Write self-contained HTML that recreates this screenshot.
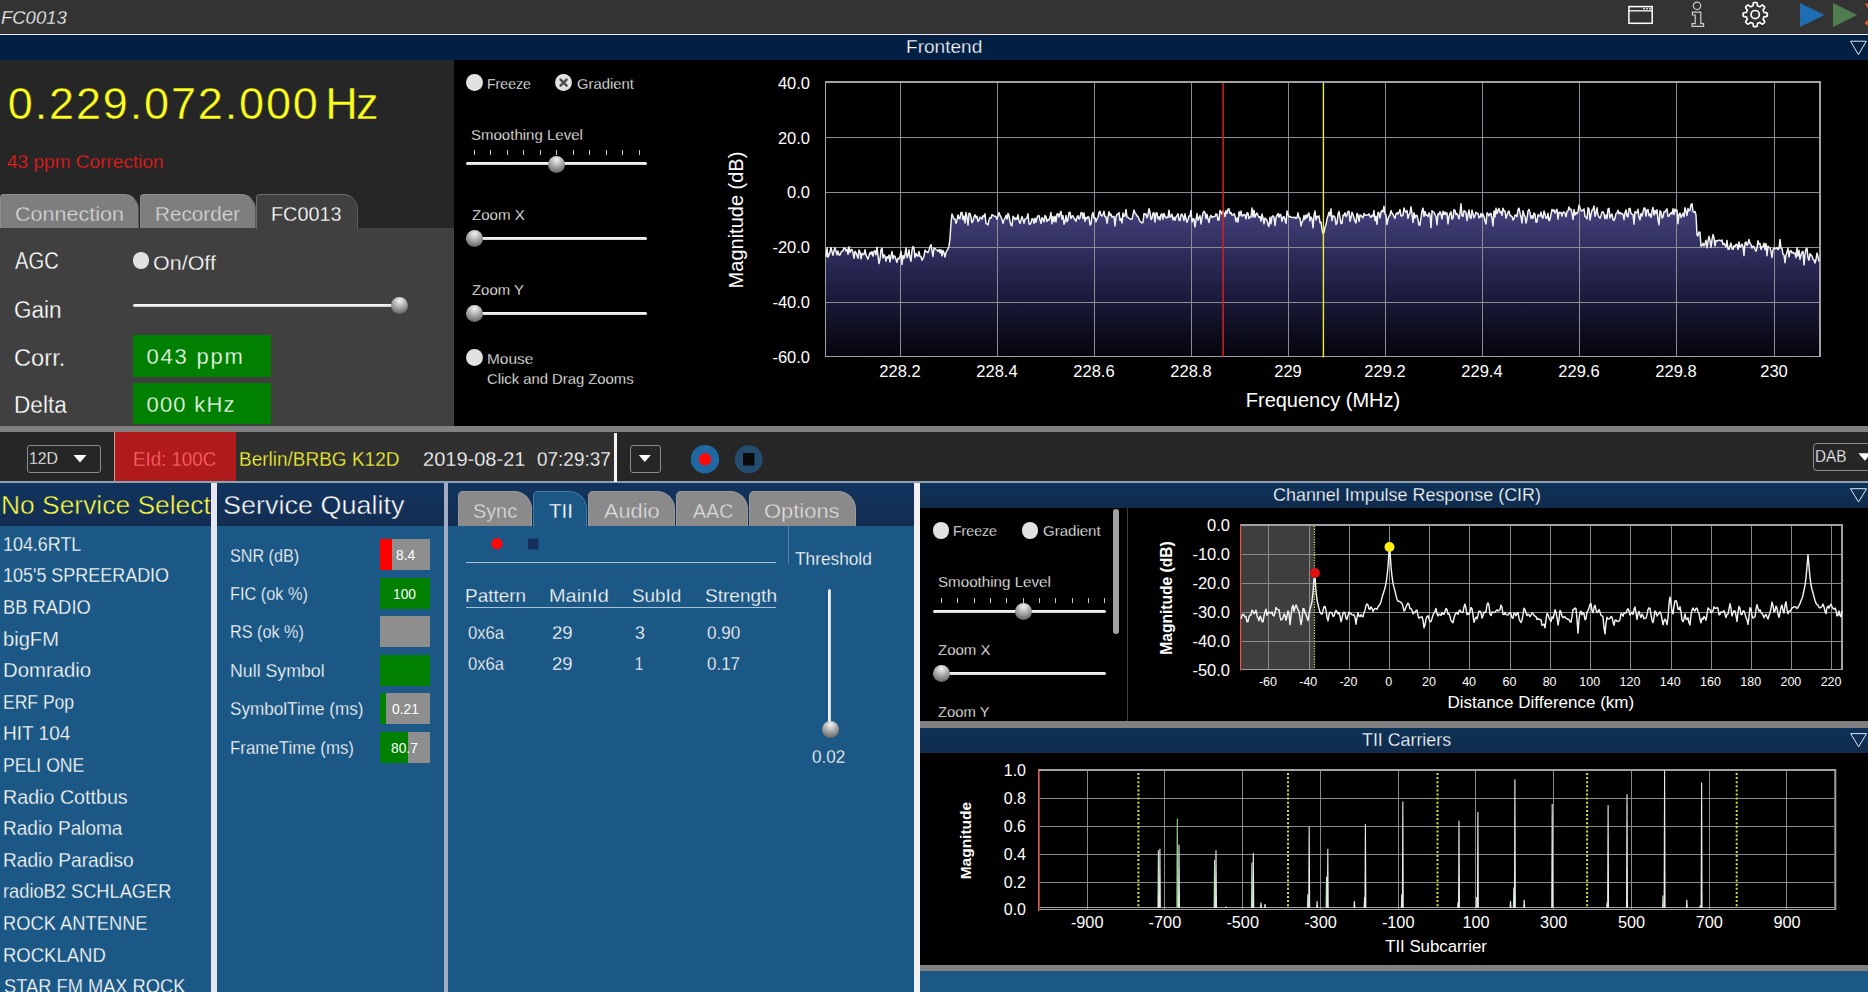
<!DOCTYPE html>
<html><head><meta charset="utf-8"><title>FC0013</title>
<style>
html,body{margin:0;padding:0;background:#000;}
body{width:1868px;height:992px;position:relative;overflow:hidden;font-family:"Liberation Sans",sans-serif;}
.t{position:absolute;white-space:pre;line-height:1;transform-origin:0 0;}
.r{position:absolute;}
svg{position:absolute;left:0;top:0;}
svg text{font-family:"Liberation Sans",sans-serif;fill:#fff;}
.radio{position:absolute;width:16.8px;height:16.8px;border-radius:50%;background:#e2e2e2;}
.thumb{position:absolute;width:17px;height:17px;border-radius:50%;background:radial-gradient(circle at 50% 22%,#f2f2f2 0%,#c4c4c4 28%,#8a8a8a 62%,#4a4a4a 100%);}
.hl{position:absolute;height:3px;border-radius:2px;background:linear-gradient(#fff,#d0d0d0);}
</style></head><body>
<div class="r" style="left:0px;top:0px;width:1868px;height:34px;background:#333333;"></div>
<div class="r" style="left:0px;top:33.5px;width:1868px;height:1.6px;background:#eeeeee;"></div>
<div class="r" style="left:0px;top:35px;width:1868px;height:25px;background:#022044;"></div>
<div class="r" style="left:0px;top:60px;width:454px;height:168px;background:#262626;"></div>
<div class="r" style="left:0px;top:228px;width:454px;height:198px;background:#404040;"></div>
<div class="r" style="left:454px;top:60px;width:1414px;height:366px;background:#000;"></div>
<div class="r" style="left:0px;top:426px;width:1868px;height:6px;background:#808080;"></div>
<div class="r" style="left:0px;top:432px;width:1868px;height:49px;background:#262626;"></div>
<div class="r" style="left:114px;top:432px;width:1px;height:49px;background:#c8a0a0;"></div>
<div class="r" style="left:115px;top:432px;width:121px;height:49px;background:#b01a1a;"></div>
<div class="r" style="left:236px;top:432px;width:378px;height:49px;background:#303030;"></div>
<div class="r" style="left:0px;top:481px;width:1868px;height:2px;background:#8fa0b4;"></div>
<div class="r" style="left:614px;top:432.5px;width:3px;height:49.5px;background:#f4f4f4;"></div>
<div class="r" style="left:0px;top:483px;width:211px;height:43px;background:linear-gradient(#10345e,#142d52);"></div>
<div class="r" style="left:0px;top:526px;width:211px;height:466px;background:#1c5886;"></div>
<div class="r" style="left:211px;top:483px;width:6px;height:509px;background:#e6e6ee;"></div>
<div class="r" style="left:217px;top:483px;width:227px;height:43px;background:linear-gradient(#10345e,#142d52);"></div>
<div class="r" style="left:217px;top:526px;width:227px;height:466px;background:#1c5886;"></div>
<div class="r" style="left:444px;top:483px;width:4px;height:509px;background:#a4acc4;"></div>
<div class="r" style="left:448px;top:483px;width:466px;height:43px;background:linear-gradient(#10345e,#142d52);"></div>
<div class="r" style="left:448px;top:526px;width:466px;height:466px;background:#1c5886;"></div>
<div class="r" style="left:914px;top:483px;width:6px;height:509px;background:#f2f0f2;"></div>
<div class="r" style="left:920px;top:483px;width:948px;height:25px;background:linear-gradient(#0d3359,#102a4b);"></div>
<div class="r" style="left:920px;top:508px;width:948px;height:213px;background:#000;"></div>
<div class="r" style="left:920px;top:721px;width:948px;height:7px;background:#808080;"></div>
<div class="r" style="left:920px;top:728px;width:948px;height:25px;background:linear-gradient(#0d3359,#102a4b);"></div>
<div class="r" style="left:920px;top:753px;width:948px;height:212px;background:#000;"></div>
<div class="r" style="left:920px;top:965px;width:948px;height:6px;background:#808080;"></div>
<div class="r" style="left:920px;top:971px;width:948px;height:21px;background:#1c5886;"></div>
<div class="t" style="left:0.95px;top:7.97px;font-size:19px;color:#f4f4f4;transform:scaleX(0.9719);font-style:italic;-webkit-text-stroke:0.28px #333333;">FC0013</div>
<div class="t" style="left:906.27px;top:37.65px;font-size:18px;color:#fff;transform:scaleX(1.0592);-webkit-text-stroke:0.28px #022044;">Frontend</div>
<div class="t" style="left:7.81px;top:80.63px;font-size:45px;color:#ffff1e;letter-spacing:1.857px;-webkit-text-stroke:0.4px #262626;">0.229.072.000</div>
<div class="t" style="left:325.23px;top:80.63px;font-size:45px;color:#ffff1e;letter-spacing:-1.741px;-webkit-text-stroke:0.4px #262626;">Hz</div>
<div class="t" style="left:6.97px;top:151.72px;font-size:19px;color:#f21a1a;transform:scaleX(1.0022);-webkit-text-stroke:0.28px #262626;">43 ppm Correction</div>
<div class="r" style="left:0px;top:194px;width:137px;height:33px;background:#7e7e7e;border:1px solid #8c8c8c;border-right-color:#5c5c5c;border-bottom:none;border-radius:4px 15px 0 0;"></div>
<div class="r" style="left:140px;top:194px;width:113.5px;height:33px;background:#7e7e7e;border:1px solid #8c8c8c;border-right-color:#5c5c5c;border-bottom:none;border-radius:4px 15px 0 0;"></div>
<div class="r" style="left:256px;top:194px;width:100px;height:34px;background:#404040;border:1px solid #6c6c6c;border-right-color:#5c5c5c;border-bottom:none;border-radius:4px 15px 0 0;"></div>
<div class="t" style="left:15.42px;top:203.06px;font-size:21px;color:#d6d6d6;transform:scaleX(1.0256);-webkit-text-stroke:0.28px #7e7e7e;">Connection</div>
<div class="t" style="left:155.35px;top:203.06px;font-size:21px;color:#d6d6d6;transform:scaleX(0.9844);-webkit-text-stroke:0.28px #7e7e7e;">Recorder</div>
<div class="t" style="left:271.42px;top:203.06px;font-size:21px;color:#fff;transform:scaleX(0.9427);-webkit-text-stroke:0.28px #404040;">FC0013</div>
<div class="t" style="left:15.00px;top:250.10px;font-size:23px;color:#fff;transform:scaleX(0.8777);-webkit-text-stroke:0.28px #404040;">AGC</div>
<div class="radio" style="left:132.7px;top:252.2px"></div>
<div class="t" style="left:153.03px;top:253.39px;font-size:20px;color:#fff;transform:scaleX(1.0745);-webkit-text-stroke:0.28px #404040;">On/Off</div>
<div class="t" style="left:13.87px;top:298.50px;font-size:23px;color:#fff;transform:scaleX(0.9807);-webkit-text-stroke:0.28px #404040;">Gain</div>
<div class="hl" style="left:133px;top:303.5px;width:260px"></div>
<div class="thumb" style="left:390.5px;top:296.5px"></div>
<div class="t" style="left:13.81px;top:346.90px;font-size:23px;color:#fff;transform:scaleX(1.0306);-webkit-text-stroke:0.28px #404040;">Corr.</div>
<div class="t" style="left:14.19px;top:393.90px;font-size:23px;color:#fff;transform:scaleX(0.9833);-webkit-text-stroke:0.28px #404040;">Delta</div>
<div class="r" style="left:133px;top:334.5px;width:137.5px;height:42.5px;background:#008000;"></div>
<div class="r" style="left:133px;top:382.5px;width:137.5px;height:41.5px;background:#008000;"></div>
<div class="t" style="left:146.43px;top:346.23px;font-size:22px;color:#f2fff0;letter-spacing:1.805px;-webkit-text-stroke:0.28px #008000;">043 ppm</div>
<div class="t" style="left:146.43px;top:394.23px;font-size:22px;color:#f2fff0;letter-spacing:1.236px;-webkit-text-stroke:0.28px #008000;">000 kHz</div>
<div class="radio" style="left:466.1px;top:74.1px"></div>
<div class="t" style="left:486.77px;top:75.83px;font-size:15.5px;color:#fff;transform:scaleX(0.9099);-webkit-text-stroke:0.28px #000000;">Freeze</div>
<div class="radio" style="left:555.2px;top:74.1px"></div>
<svg width="1868" height="992" style="pointer-events:none"><path d="M560.6 79.7 L566.6 85.7 M566.6 79.7 L560.6 85.7" stroke="#4c4c4c" stroke-width="2.5" stroke-linecap="round" fill="none"/></svg>
<div class="t" style="left:576.66px;top:75.83px;font-size:15.5px;color:#fff;transform:scaleX(0.9575);-webkit-text-stroke:0.28px #000000;">Gradient</div>
<div class="t" style="left:471.35px;top:126.63px;font-size:15.5px;color:#fff;transform:scaleX(0.9684);-webkit-text-stroke:0.28px #000000;">Smoothing Level</div>
<div class="r" style="left:473.8px;top:150px;width:1px;height:5px;background:#c8c8c8;"></div>
<div class="r" style="left:490.3px;top:150px;width:1px;height:5px;background:#c8c8c8;"></div>
<div class="r" style="left:506.8px;top:150px;width:1px;height:5px;background:#c8c8c8;"></div>
<div class="r" style="left:523.3px;top:150px;width:1px;height:5px;background:#c8c8c8;"></div>
<div class="r" style="left:539.8px;top:150px;width:1px;height:5px;background:#c8c8c8;"></div>
<div class="r" style="left:556.2px;top:150px;width:1px;height:5px;background:#c8c8c8;"></div>
<div class="r" style="left:572.7px;top:150px;width:1px;height:5px;background:#c8c8c8;"></div>
<div class="r" style="left:589.2px;top:150px;width:1px;height:5px;background:#c8c8c8;"></div>
<div class="r" style="left:605.7px;top:150px;width:1px;height:5px;background:#c8c8c8;"></div>
<div class="r" style="left:622.2px;top:150px;width:1px;height:5px;background:#c8c8c8;"></div>
<div class="r" style="left:638.7px;top:150px;width:1px;height:5px;background:#c8c8c8;"></div>
<div class="hl" style="left:466.3px;top:162px;width:181px"></div>
<div class="thumb" style="left:548.4px;top:155.5px"></div>
<div class="t" style="left:472.15px;top:206.63px;font-size:15.5px;color:#fff;transform:scaleX(0.9743);-webkit-text-stroke:0.28px #000000;">Zoom X</div>
<div class="hl" style="left:466.3px;top:237px;width:181px"></div>
<div class="thumb" style="left:466px;top:230px"></div>
<div class="t" style="left:472.15px;top:281.73px;font-size:15.5px;color:#fff;transform:scaleX(0.9612);-webkit-text-stroke:0.28px #000000;">Zoom Y</div>
<div class="hl" style="left:466.3px;top:312.2px;width:181px"></div>
<div class="thumb" style="left:466px;top:305.2px"></div>
<div class="radio" style="left:466.1px;top:349px"></div>
<div class="t" style="left:486.77px;top:351.13px;font-size:15.5px;color:#fff;transform:scaleX(0.9941);-webkit-text-stroke:0.28px #000000;">Mouse</div>
<div class="t" style="left:487.26px;top:370.73px;font-size:15.5px;color:#fff;transform:scaleX(0.9561);-webkit-text-stroke:0.28px #000000;">Click and Drag Zooms</div>
<div class="r" style="left:26.5px;top:445px;width:72.5px;height:25.5px;border:1px solid #8c8c8c;border-radius:3px;"></div>
<div class="t" style="left:28.82px;top:450.71px;font-size:16px;color:#fff;transform:scaleX(0.9868);-webkit-text-stroke:0.28px #262626;">12D</div>
<svg width="1868" height="992"><path d="M73.5 455 H86.5 L80 462.5 Z" fill="#fff"/><path d="M638.8 455 H650.8 L644.8 462 Z" fill="#fff"/><path d="M1858.4 453.2 H1871.4 L1864.9 460.7 Z" fill="#fff"/><circle cx="705" cy="459.3" r="14.2" fill="#1f68a4"/><circle cx="705" cy="459.3" r="6.2" fill="#ff0a0a"/><circle cx="748.7" cy="459.3" r="14" fill="#244c6e"/><rect x="743" y="453" width="11.5" height="12.5" fill="#0a0a0a"/></svg>
<div class="t" style="left:132.50px;top:449.39px;font-size:20px;color:#ff6464;transform:scaleX(0.9353);-webkit-text-stroke:0.28px #b01a1a;">EId: 100C</div>
<div class="t" style="left:239.48px;top:449.39px;font-size:20px;color:#f4f436;transform:scaleX(0.9495);-webkit-text-stroke:0.28px #303030;">Berlin/BRBG K12D</div>
<div class="t" style="left:422.90px;top:449.39px;font-size:20px;color:#fff;transform:scaleX(1.0010);-webkit-text-stroke:0.28px #303030;">2019-08-21</div>
<div class="t" style="left:537.24px;top:449.39px;font-size:20px;color:#fff;transform:scaleX(0.9474);-webkit-text-stroke:0.28px #303030;">07:29:37</div>
<div class="r" style="left:630px;top:445px;width:28.7px;height:25.5px;border:1px solid #8c8c8c;border-radius:3px;"></div>
<div class="r" style="left:1813px;top:443px;width:70px;height:25.6px;border:1px solid #8c8c8c;border-radius:4px;"></div>
<div class="t" style="left:1815.38px;top:449.31px;font-size:16px;color:#fff;transform:scaleX(0.9545);-webkit-text-stroke:0.28px #262626;">DAB</div>
<div class="r" style="left:0;top:483px;width:211px;height:43px;overflow:hidden">
<div class="t" style="left:1.15px;top:10.34px;font-size:25px;color:#ffff3a;transform:scaleX(1.0560);-webkit-text-stroke:0.45px #13305a;">No Service Select</div>
</div>
<div class="t" style="left:223.19px;top:492.74px;font-size:25px;color:#fff;transform:scaleX(1.0790);-webkit-text-stroke:0.45px #13305a;">Service Quality</div>
<div class="t" style="left:3.26px;top:534.71px;font-size:19.5px;color:#fff;transform:scaleX(0.9176);-webkit-text-stroke:0.28px #1c5886;">104.6RTL</div>
<div class="t" style="left:3.25px;top:566.31px;font-size:19.5px;color:#fff;transform:scaleX(0.9206);-webkit-text-stroke:0.28px #1c5886;">105'5 SPREERADIO</div>
<div class="t" style="left:3.13px;top:597.91px;font-size:19.5px;color:#fff;transform:scaleX(0.9418);-webkit-text-stroke:0.28px #1c5886;">BB RADIO</div>
<div class="t" style="left:3.29px;top:629.51px;font-size:19.5px;color:#fff;transform:scaleX(1.0315);-webkit-text-stroke:0.28px #1c5886;">bigFM</div>
<div class="t" style="left:2.97px;top:661.11px;font-size:19.5px;color:#fff;transform:scaleX(1.0427);-webkit-text-stroke:0.28px #1c5886;">Domradio</div>
<div class="t" style="left:3.20px;top:692.71px;font-size:19.5px;color:#fff;transform:scaleX(0.8979);-webkit-text-stroke:0.28px #1c5886;">ERF Pop</div>
<div class="t" style="left:3.08px;top:724.31px;font-size:19.5px;color:#fff;transform:scaleX(0.9748);-webkit-text-stroke:0.28px #1c5886;">HIT 104</div>
<div class="t" style="left:3.19px;top:755.91px;font-size:19.5px;color:#fff;transform:scaleX(0.9046);-webkit-text-stroke:0.28px #1c5886;">PELI ONE</div>
<div class="t" style="left:3.03px;top:787.51px;font-size:19.5px;color:#fff;transform:scaleX(1.0092);-webkit-text-stroke:0.28px #1c5886;">Radio Cottbus</div>
<div class="t" style="left:3.08px;top:819.11px;font-size:19.5px;color:#fff;transform:scaleX(0.9752);-webkit-text-stroke:0.28px #1c5886;">Radio Paloma</div>
<div class="t" style="left:3.07px;top:850.71px;font-size:19.5px;color:#fff;transform:scaleX(0.9806);-webkit-text-stroke:0.28px #1c5886;">Radio Paradiso</div>
<div class="t" style="left:3.41px;top:882.31px;font-size:19.5px;color:#fff;transform:scaleX(0.9362);-webkit-text-stroke:0.28px #1c5886;">radioB2 SCHLAGER</div>
<div class="t" style="left:3.13px;top:913.91px;font-size:19.5px;color:#fff;transform:scaleX(0.9398);-webkit-text-stroke:0.28px #1c5886;">ROCK ANTENNE</div>
<div class="t" style="left:3.12px;top:945.51px;font-size:19.5px;color:#fff;transform:scaleX(0.9482);-webkit-text-stroke:0.28px #1c5886;">ROCKLAND</div>
<div class="t" style="left:3.78px;top:977.11px;font-size:19.5px;color:#fff;transform:scaleX(0.9373);-webkit-text-stroke:0.28px #1c5886;">STAR FM MAX ROCK</div>
<div class="t" style="left:230.07px;top:547.67px;font-size:17.5px;color:#fff;transform:scaleX(0.9236);-webkit-text-stroke:0.28px #1c5886;">SNR (dB)</div>
<div class="t" style="left:230.10px;top:586.07px;font-size:17.5px;color:#fff;transform:scaleX(0.9320);-webkit-text-stroke:0.28px #1c5886;">FIC (ok %)</div>
<div class="t" style="left:230.10px;top:624.47px;font-size:17.5px;color:#fff;transform:scaleX(0.9267);-webkit-text-stroke:0.28px #1c5886;">RS (ok %)</div>
<div class="t" style="left:229.98px;top:662.87px;font-size:17.5px;color:#fff;transform:scaleX(1.0140);-webkit-text-stroke:0.28px #1c5886;">Null Symbol</div>
<div class="t" style="left:230.03px;top:701.27px;font-size:17.5px;color:#fff;transform:scaleX(0.9786);-webkit-text-stroke:0.28px #1c5886;">SymbolTime (ms)</div>
<div class="t" style="left:230.05px;top:739.67px;font-size:17.5px;color:#fff;transform:scaleX(0.9637);-webkit-text-stroke:0.28px #1c5886;">FrameTime (ms)</div>
<div class="r" style="left:380px;top:539.0px;width:50px;height:31px;background:#8e8e8e;"></div>
<div class="r" style="left:380px;top:539.0px;width:12px;height:31px;background:#ff0000;"></div>
<div class="t" style="left:395.62px;top:548.26px;font-size:14.5px;color:#fff;transform:scaleX(0.9500);-webkit-text-stroke:0;">8.4</div>
<div class="r" style="left:380px;top:577.5px;width:50px;height:31px;background:#8e8e8e;"></div>
<div class="r" style="left:380px;top:577.5px;width:50px;height:31px;background:#008000;"></div>
<div class="t" style="left:393.01px;top:586.76px;font-size:14.5px;color:#fff;transform:scaleX(0.9500);-webkit-text-stroke:0;">100</div>
<div class="r" style="left:380px;top:616.0px;width:50px;height:31px;background:#8e8e8e;"></div>
<div class="r" style="left:380px;top:654.5px;width:50px;height:31px;background:#8e8e8e;"></div>
<div class="r" style="left:380px;top:654.5px;width:50px;height:31px;background:#008000;"></div>
<div class="r" style="left:380px;top:693.0px;width:50px;height:31px;background:#8e8e8e;"></div>
<div class="r" style="left:380px;top:693.0px;width:6px;height:31px;background:#008000;"></div>
<div class="t" style="left:391.94px;top:702.26px;font-size:14.5px;color:#fff;transform:scaleX(0.9500);-webkit-text-stroke:0;">0.21</div>
<div class="r" style="left:380px;top:731.5px;width:50px;height:31px;background:#8e8e8e;"></div>
<div class="r" style="left:380px;top:731.5px;width:27.5px;height:31px;background:#008000;"></div>
<div class="t" style="left:391.26px;top:740.76px;font-size:14.5px;color:#fff;transform:scaleX(0.9500);-webkit-text-stroke:0;">80.7</div>
<div class="r" style="left:458.3px;top:491px;width:71.30000000000001px;height:34px;background:#8a8a8a;border:1px solid #989898;border-bottom:none;border-radius:5px 18px 0 0;"></div>
<div class="r" style="left:532.7px;top:491px;width:52.299999999999955px;height:35px;background:#1c5886;border:1px solid #3f79a6;border-bottom:none;border-radius:5px 18px 0 0;"></div>
<div class="r" style="left:587.6px;top:491px;width:85.29999999999995px;height:34px;background:#8a8a8a;border:1px solid #989898;border-bottom:none;border-radius:5px 18px 0 0;"></div>
<div class="r" style="left:675.8px;top:491px;width:70.70000000000005px;height:34px;background:#8a8a8a;border:1px solid #989898;border-bottom:none;border-radius:5px 18px 0 0;"></div>
<div class="r" style="left:749px;top:491px;width:105px;height:34px;background:#8a8a8a;border:1px solid #989898;border-bottom:none;border-radius:5px 18px 0 0;"></div>
<div class="t" style="left:473.32px;top:500.36px;font-size:21px;color:#dcdcdc;transform:scaleX(0.9436);-webkit-text-stroke:0.28px #8a8a8a;">Sync</div>
<div class="t" style="left:548.79px;top:500.36px;font-size:21px;color:#fff;transform:scaleX(0.9840);-webkit-text-stroke:0.28px #1c5886;">TII</div>
<div class="t" style="left:603.74px;top:500.36px;font-size:21px;color:#dcdcdc;transform:scaleX(1.0357);-webkit-text-stroke:0.28px #8a8a8a;">Audio</div>
<div class="t" style="left:693.20px;top:500.36px;font-size:21px;color:#dcdcdc;transform:scaleX(0.9329);-webkit-text-stroke:0.28px #8a8a8a;">AAC</div>
<div class="t" style="left:764.11px;top:500.36px;font-size:21px;color:#dcdcdc;transform:scaleX(1.0444);-webkit-text-stroke:0.28px #8a8a8a;">Options</div>
<svg width="1868" height="992"><circle cx="497" cy="543.7" r="5.6" fill="#ff0a0a"/><rect x="528" y="538.6" width="10.4" height="10.8" fill="#13305a"/></svg>
<div class="r" style="left:465.7px;top:562px;width:310.2px;height:1px;background:#a9bfd3;"></div>
<div class="r" style="left:788px;top:526px;width:1px;height:37.5px;background:#4d82ad;"></div>
<div class="t" style="left:795.00px;top:549.94px;font-size:18.5px;color:#fff;transform:scaleX(0.9335);-webkit-text-stroke:0.28px #1c5886;">Threshold</div>
<div class="t" style="left:465.49px;top:586.64px;font-size:18.5px;color:#fff;transform:scaleX(1.0232);-webkit-text-stroke:0.28px #1c5886;">Pattern</div>
<div class="t" style="left:549.41px;top:586.64px;font-size:18.5px;color:#fff;transform:scaleX(1.0754);-webkit-text-stroke:0.28px #1c5886;">MainId</div>
<div class="t" style="left:632.35px;top:586.64px;font-size:18.5px;color:#fff;transform:scaleX(1.0184);-webkit-text-stroke:0.28px #1c5886;">SubId</div>
<div class="t" style="left:705.14px;top:586.64px;font-size:18.5px;color:#fff;transform:scaleX(1.0295);-webkit-text-stroke:0.28px #1c5886;">Strength</div>
<div class="r" style="left:465.7px;top:606.7px;width:310.2px;height:1px;background:#a9bfd3;"></div>
<div class="t" style="left:468.13px;top:624.77px;font-size:17.5px;color:#fff;transform:scaleX(0.9519);-webkit-text-stroke:0.28px #1c5886;">0x6a</div>
<div class="t" style="left:552.07px;top:624.77px;font-size:17.5px;color:#fff;transform:scaleX(1.0584);-webkit-text-stroke:0.28px #1c5886;">29</div>
<div class="t" style="left:635.08px;top:624.77px;font-size:17.5px;color:#fff;transform:scaleX(1.0226);-webkit-text-stroke:0.28px #1c5886;">3</div>
<div class="t" style="left:707.32px;top:624.77px;font-size:17.5px;color:#fff;transform:scaleX(0.9778);-webkit-text-stroke:0.28px #1c5886;">0.90</div>
<div class="t" style="left:468.13px;top:655.67px;font-size:17.5px;color:#fff;transform:scaleX(0.9519);-webkit-text-stroke:0.28px #1c5886;">0x6a</div>
<div class="t" style="left:552.07px;top:655.67px;font-size:17.5px;color:#fff;transform:scaleX(1.0584);-webkit-text-stroke:0.28px #1c5886;">29</div>
<div class="t" style="left:634.89px;top:655.67px;font-size:17.5px;color:#fff;transform:scaleX(0.8276);-webkit-text-stroke:0.28px #1c5886;">1</div>
<div class="t" style="left:707.32px;top:655.67px;font-size:17.5px;color:#fff;transform:scaleX(0.9704);-webkit-text-stroke:0.28px #1c5886;">0.17</div>
<div class="r" style="left:828px;top:589px;width:3px;height:135px;border-radius:2px;background:linear-gradient(90deg,#fff,#c8d0d8)"></div>
<div class="thumb" style="left:821.5px;top:721px"></div>
<div class="t" style="left:811.92px;top:748.57px;font-size:17.5px;color:#fff;transform:scaleX(0.9765);-webkit-text-stroke:0.28px #1c5886;">0.02</div>
<div class="t" style="left:1273.10px;top:486.05px;font-size:18px;color:#fff;transform:scaleX(0.9958);-webkit-text-stroke:0.28px #0e3155;">Channel Impulse Response (CIR)</div>
<div class="t" style="left:1362.34px;top:731.05px;font-size:18px;color:#fff;transform:scaleX(0.9898);-webkit-text-stroke:0.28px #0e3055;">TII Carriers</div>
<div class="radio" style="left:932.5px;top:521.8px"></div>
<div class="t" style="left:953.27px;top:522.63px;font-size:15.5px;color:#fff;transform:scaleX(0.9099);-webkit-text-stroke:0.28px #000000;">Freeze</div>
<div class="radio" style="left:1021.5px;top:521.8px"></div>
<div class="t" style="left:1043.01px;top:522.63px;font-size:15.5px;color:#fff;transform:scaleX(0.9694);-webkit-text-stroke:0.28px #000000;">Gradient</div>
<div class="t" style="left:938.02px;top:574.23px;font-size:15.5px;color:#fff;transform:scaleX(0.9779);-webkit-text-stroke:0.28px #000000;">Smoothing Level</div>
<div class="r" style="left:941.1px;top:598px;width:1px;height:5px;background:#c8c8c8;"></div>
<div class="r" style="left:957.4px;top:598px;width:1px;height:5px;background:#c8c8c8;"></div>
<div class="r" style="left:973.8px;top:598px;width:1px;height:5px;background:#c8c8c8;"></div>
<div class="r" style="left:990.1px;top:598px;width:1px;height:5px;background:#c8c8c8;"></div>
<div class="r" style="left:1006.4px;top:598px;width:1px;height:5px;background:#c8c8c8;"></div>
<div class="r" style="left:1022.8px;top:598px;width:1px;height:5px;background:#c8c8c8;"></div>
<div class="r" style="left:1039.1px;top:598px;width:1px;height:5px;background:#c8c8c8;"></div>
<div class="r" style="left:1055.4px;top:598px;width:1px;height:5px;background:#c8c8c8;"></div>
<div class="r" style="left:1071.7px;top:598px;width:1px;height:5px;background:#c8c8c8;"></div>
<div class="r" style="left:1088.1px;top:598px;width:1px;height:5px;background:#c8c8c8;"></div>
<div class="r" style="left:1104.4px;top:598px;width:1px;height:5px;background:#c8c8c8;"></div>
<div class="hl" style="left:933px;top:609.8px;width:172.5px"></div>
<div class="thumb" style="left:1014.6px;top:602.8px"></div>
<div class="t" style="left:938.25px;top:641.93px;font-size:15.5px;color:#fff;transform:scaleX(0.9687);-webkit-text-stroke:0.28px #000000;">Zoom X</div>
<div class="hl" style="left:933px;top:672px;width:172.5px"></div>
<div class="thumb" style="left:933px;top:665px"></div>
<div class="r" style="left:920px;top:700px;width:200px;height:21px;overflow:hidden">
<div class="t" style="left:18.26px;top:3.63px;font-size:15.5px;color:#fff;transform:scaleX(0.9555);-webkit-text-stroke:0.28px #000000;">Zoom Y</div>
</div>
<div class="r" style="left:1112.6px;top:509.2px;width:6.3px;height:125px;border-radius:3px;background:#a2a2a2"></div>
<div class="r" style="left:1126.5px;top:508px;width:1px;height:213px;background:#3c3c3c;"></div>
<svg width="1868" height="992" viewBox="0 0 1868 992">
<defs><linearGradient id="fg" x1="0" y1="205" x2="0" y2="357" gradientUnits="userSpaceOnUse"><stop offset="0" stop-color="#44427c"/><stop offset="0.45" stop-color="#25244d"/><stop offset="1" stop-color="#04040c"/></linearGradient></defs>
<path d="M1850.5 41.2 H1866.3 L1858.4 54.6 Z" fill="none" stroke="#dfe9f3" stroke-width="1"/>
<path d="M1850.4 488.7 H1866.6 L1858.5 502 Z" fill="none" stroke="#dfe9f3" stroke-width="1"/>
<path d="M1850.7 733.6 H1866.5 L1858.6 746.8 Z" fill="none" stroke="#dfe9f3" stroke-width="1"/>
<g fill="none" stroke="#fff" stroke-width="1.5"><rect x="1628.9" y="6.6" width="23.3" height="16.7"/><path d="M1629 10.8 H1652" stroke-width="1.3"/></g>
<g fill="#fff"><rect x="1643.2" y="8" width="1.6" height="1.4"/><rect x="1646.2" y="8" width="1.6" height="1.4"/><rect x="1649.2" y="8" width="1.6" height="1.4"/></g>
<g fill="none" stroke="#cfcfcf" stroke-width="1.2"><circle cx="1697" cy="5.8" r="3.7"/><path d="M1692.4 12.2 H1700.8 V23.6 H1703.6 V26.4 H1692.1 V23.6 H1695.2 V15 H1692.4 Z"/></g>
<path d="M1755.20 2.50 L1755.67 2.51 L1756.15 2.55 L1756.61 2.65 L1757.03 3.02 L1757.26 4.25 L1757.39 5.49 L1757.66 5.87 L1757.98 6.03 L1758.32 6.15 L1758.64 6.29 L1758.97 6.42 L1759.29 6.57 L1759.63 6.69 L1760.10 6.61 L1761.06 5.83 L1762.09 5.11 L1762.65 5.15 L1763.05 5.41 L1763.41 5.72 L1763.76 6.04 L1764.08 6.39 L1764.39 6.75 L1764.65 7.15 L1764.69 7.71 L1763.97 8.74 L1763.19 9.70 L1763.11 10.17 L1763.23 10.51 L1763.38 10.83 L1763.51 11.16 L1763.65 11.48 L1763.77 11.82 L1763.93 12.14 L1764.31 12.41 L1765.55 12.54 L1766.78 12.77 L1767.15 13.19 L1767.25 13.65 L1767.29 14.13 L1767.30 14.60 L1767.29 15.07 L1767.25 15.55 L1767.15 16.01 L1766.78 16.43 L1765.55 16.66 L1764.31 16.79 L1763.93 17.06 L1763.77 17.38 L1763.65 17.72 L1763.51 18.04 L1763.38 18.37 L1763.23 18.69 L1763.11 19.03 L1763.19 19.50 L1763.97 20.46 L1764.69 21.49 L1764.65 22.05 L1764.39 22.45 L1764.08 22.81 L1763.76 23.16 L1763.41 23.48 L1763.05 23.79 L1762.65 24.05 L1762.09 24.09 L1761.06 23.37 L1760.10 22.59 L1759.63 22.51 L1759.29 22.63 L1758.97 22.78 L1758.64 22.91 L1758.32 23.05 L1757.98 23.17 L1757.66 23.33 L1757.39 23.71 L1757.26 24.95 L1757.03 26.18 L1756.61 26.55 L1756.15 26.65 L1755.67 26.69 L1755.20 26.70 L1754.73 26.69 L1754.25 26.65 L1753.79 26.55 L1753.37 26.18 L1753.14 24.95 L1753.01 23.71 L1752.74 23.33 L1752.42 23.17 L1752.08 23.05 L1751.76 22.91 L1751.43 22.78 L1751.11 22.63 L1750.77 22.51 L1750.30 22.59 L1749.34 23.37 L1748.31 24.09 L1747.75 24.05 L1747.35 23.79 L1746.99 23.48 L1746.64 23.16 L1746.32 22.81 L1746.01 22.45 L1745.75 22.05 L1745.71 21.49 L1746.43 20.46 L1747.21 19.50 L1747.29 19.03 L1747.17 18.69 L1747.02 18.37 L1746.89 18.04 L1746.75 17.72 L1746.63 17.38 L1746.47 17.06 L1746.09 16.79 L1744.85 16.66 L1743.62 16.43 L1743.25 16.01 L1743.15 15.55 L1743.11 15.07 L1743.10 14.60 L1743.11 14.13 L1743.15 13.65 L1743.25 13.19 L1743.62 12.77 L1744.85 12.54 L1746.09 12.41 L1746.47 12.14 L1746.63 11.82 L1746.75 11.48 L1746.89 11.16 L1747.02 10.83 L1747.17 10.51 L1747.29 10.17 L1747.21 9.70 L1746.43 8.74 L1745.71 7.71 L1745.75 7.15 L1746.01 6.75 L1746.32 6.39 L1746.64 6.04 L1746.99 5.72 L1747.35 5.41 L1747.75 5.15 L1748.31 5.11 L1749.34 5.83 L1750.30 6.61 L1750.77 6.69 L1751.11 6.57 L1751.43 6.42 L1751.76 6.29 L1752.08 6.15 L1752.42 6.03 L1752.74 5.87 L1753.01 5.49 L1753.14 4.25 L1753.37 3.02 L1753.79 2.65 L1754.25 2.55 L1754.73 2.51 Z" fill="none" stroke="#fff" stroke-width="1.7" stroke-linejoin="round"/>
<circle cx="1755.2" cy="14.6" r="4.1" fill="none" stroke="#fff" stroke-width="1.7"/>
<path d="M1800 3 L1824.6 15 L1800 27 Z" fill="#1f6db3"/>
<path d="M1833 3 L1857.2 15 L1833 27 Z" fill="#4f7d50"/>
<path d="M1865 3.5 L1868 3.5 L1868 8.5 Z M1864.5 23 L1868 20 V26 Z" fill="#e0642a"/>
<polygon points="826,356 826,257.0 827,247.8 828,257.3 829,254.9 830,251.8 831,247.5 832,251.7 833,255.3 834,250.5 835,247.8 836,251.3 837,254.8 838,251.0 839,255.0 840,255.0 841,252.4 842,250.9 843,251.0 844,247.7 845,248.3 846,250.9 847,249.1 848,254.3 849,246.7 850,252.4 851,250.0 852,249.5 853,252.6 854,258.3 855,251.3 856,252.5 857,255.6 858,258.2 859,249.9 860,251.9 861,258.8 862,253.3 863,254.6 864,254.4 865,249.7 866,254.8 867,257.2 868,259.1 869,255.9 870,252.5 871,254.1 872,251.6 873,256.0 874,251.5 875,250.7 876,254.7 877,247.2 878,255.8 879,263.5 880,259.4 881,249.6 882,248.1 883,258.0 884,254.7 885,256.1 886,261.0 887,256.7 888,258.0 889,255.1 890,261.9 891,255.6 892,251.6 893,258.8 894,255.8 895,256.4 896,259.5 897,262.4 898,258.3 899,258.9 900,256.6 901,251.3 902,264.4 903,255.4 904,258.5 905,254.5 906,247.9 907,257.7 908,255.6 909,249.8 910,257.9 911,261.2 912,250.0 913,246.4 914,248.2 915,257.6 916,253.4 917,255.8 918,256.0 919,251.4 920,256.5 921,256.5 922,260.3 923,258.4 924,256.2 925,250.1 926,251.7 927,251.8 928,252.6 929,250.3 930,246.5 931,244.7 932,251.0 933,256.4 934,248.1 935,248.7 936,249.5 937,250.2 938,251.3 939,249.5 940,252.7 941,249.7 942,255.8 943,250.5 944,252.8 945,257.0 946,252.5 947,250.5 948,249.0 949,246.1 950,238.1 951,222.8 952,213.9 953,216.5 954,219.0 955,219.0 956,223.3 957,220.5 958,215.0 959,218.3 960,218.7 961,212.4 962,212.4 963,219.7 964,216.0 965,223.0 966,212.4 967,217.4 968,225.0 969,213.2 970,213.5 971,217.2 972,222.7 973,221.2 974,216.7 975,214.8 976,217.7 977,216.3 978,221.4 979,220.3 980,217.1 981,217.7 982,219.2 983,215.8 984,216.4 985,213.8 986,223.6 987,223.9 988,224.9 989,219.9 990,217.6 991,218.1 992,214.7 993,215.2 994,216.1 995,216.2 996,216.7 997,219.3 998,215.6 999,212.4 1000,215.5 1001,217.1 1002,219.5 1003,223.4 1004,220.0 1005,218.0 1006,215.4 1007,219.1 1008,213.4 1009,215.9 1010,221.5 1011,225.0 1012,225.8 1013,216.2 1014,217.4 1015,219.7 1016,218.0 1017,219.3 1018,214.8 1019,221.0 1020,223.4 1021,220.1 1022,216.4 1023,219.6 1024,223.4 1025,218.9 1026,218.8 1027,217.9 1028,213.8 1029,223.8 1030,224.4 1031,222.6 1032,218.8 1033,219.0 1034,223.4 1035,218.2 1036,222.2 1037,217.6 1038,215.8 1039,215.6 1040,220.0 1041,223.4 1042,217.6 1043,218.9 1044,221.9 1045,215.6 1046,216.6 1047,221.5 1048,219.6 1049,220.2 1050,217.0 1051,212.4 1052,223.8 1053,216.6 1054,221.5 1055,216.2 1056,221.9 1057,214.0 1058,213.8 1059,217.1 1060,213.7 1061,211.2 1062,219.2 1063,215.7 1064,224.2 1065,221.9 1066,215.5 1067,221.6 1068,219.6 1069,212.6 1070,212.2 1071,218.4 1072,216.1 1073,215.7 1074,218.4 1075,219.4 1076,221.3 1077,217.2 1078,215.7 1079,219.0 1080,217.9 1081,212.7 1082,212.7 1083,218.6 1084,212.9 1085,221.3 1086,217.5 1087,218.7 1088,216.5 1089,217.3 1090,225.0 1091,223.9 1092,215.2 1093,212.5 1094,218.1 1095,217.8 1096,221.8 1097,218.8 1098,217.4 1099,212.5 1100,211.3 1101,215.6 1102,216.0 1103,214.4 1104,211.3 1105,216.8 1106,216.8 1107,223.2 1108,217.5 1109,211.7 1110,215.2 1111,214.1 1112,217.3 1113,216.6 1114,216.4 1115,225.9 1116,216.9 1117,214.4 1118,214.0 1119,212.6 1120,220.4 1121,218.6 1122,222.9 1123,213.0 1124,216.3 1125,215.9 1126,209.4 1127,217.1 1128,217.3 1129,218.3 1130,218.8 1131,219.4 1132,219.0 1133,214.8 1134,210.0 1135,212.9 1136,214.1 1137,215.8 1138,216.6 1139,219.0 1140,221.4 1141,222.0 1142,222.9 1143,222.5 1144,213.4 1145,214.6 1146,213.9 1147,217.7 1148,214.7 1149,208.8 1150,212.3 1151,219.4 1152,218.4 1153,213.2 1154,212.8 1155,222.1 1156,213.1 1157,212.9 1158,219.0 1159,216.7 1160,220.0 1161,214.7 1162,213.9 1163,219.2 1164,213.4 1165,216.2 1166,218.0 1167,217.2 1168,217.5 1169,210.3 1170,217.2 1171,216.5 1172,214.1 1173,219.9 1174,217.2 1175,220.3 1176,216.9 1177,215.7 1178,213.7 1179,220.3 1180,220.6 1181,214.4 1182,214.3 1183,216.5 1184,220.5 1185,213.7 1186,218.8 1187,222.2 1188,219.8 1189,216.0 1190,216.0 1191,210.4 1192,222.1 1193,219.0 1194,218.8 1195,226.8 1196,219.9 1197,213.6 1198,220.2 1199,217.7 1200,215.6 1201,224.0 1202,218.1 1203,212.9 1204,211.3 1205,212.7 1206,218.5 1207,214.2 1208,219.1 1209,222.5 1210,216.8 1211,215.3 1212,217.5 1213,216.7 1214,216.8 1215,216.4 1216,213.9 1217,214.5 1218,220.2 1219,220.0 1220,210.6 1221,211.7 1222,214.0 1223,211.3 1224,212.8 1225,216.6 1226,210.7 1227,213.4 1228,209.2 1229,208.8 1230,213.4 1231,212.6 1232,215.1 1233,215.1 1234,213.7 1235,215.9 1236,221.6 1237,218.1 1238,222.1 1239,211.7 1240,215.7 1241,211.1 1242,216.1 1243,215.7 1244,214.4 1245,214.9 1246,218.9 1247,212.8 1248,213.2 1249,218.5 1250,217.1 1251,216.9 1252,208.0 1253,217.1 1254,210.3 1255,217.2 1256,214.4 1257,213.0 1258,215.5 1259,217.5 1260,216.5 1261,221.1 1262,214.0 1263,218.2 1264,223.8 1265,218.1 1266,219.1 1267,220.3 1268,224.9 1269,226.5 1270,217.3 1271,223.7 1272,216.5 1273,215.8 1274,217.2 1275,225.6 1276,217.5 1277,215.4 1278,213.5 1279,217.3 1280,214.2 1281,215.2 1282,221.3 1283,217.4 1284,216.7 1285,219.9 1286,223.4 1287,210.9 1288,213.9 1289,216.9 1290,216.5 1291,217.1 1292,217.6 1293,217.3 1294,217.6 1295,217.3 1296,218.5 1297,217.6 1298,212.8 1299,217.9 1300,218.1 1301,226.0 1302,222.1 1303,220.3 1304,215.5 1305,219.6 1306,215.0 1307,217.7 1308,214.2 1309,213.0 1310,220.9 1311,217.1 1312,218.9 1313,227.8 1314,215.5 1315,211.0 1316,220.0 1317,216.2 1318,217.1 1319,215.9 1320,222.7 1321,222.1 1322,229.1 1323,233.7 1324,232.5 1325,227.0 1326,224.8 1327,219.0 1328,215.8 1329,212.3 1330,215.9 1331,208.9 1332,220.7 1333,216.1 1334,216.0 1335,217.4 1336,224.6 1337,223.0 1338,214.3 1339,211.4 1340,217.5 1341,223.6 1342,223.5 1343,215.2 1344,215.4 1345,212.9 1346,216.6 1347,214.8 1348,211.4 1349,211.3 1350,221.4 1351,217.7 1352,212.2 1353,214.5 1354,218.0 1355,221.4 1356,223.0 1357,213.4 1358,214.8 1359,221.3 1360,215.0 1361,215.6 1362,216.6 1363,217.9 1364,213.4 1365,215.2 1366,215.3 1367,215.1 1368,215.0 1369,213.9 1370,216.4 1371,217.4 1372,215.3 1373,216.3 1374,210.6 1375,220.7 1376,216.2 1377,224.3 1378,212.4 1379,213.3 1380,217.9 1381,212.0 1382,210.5 1383,211.9 1384,206.3 1385,213.7 1386,215.0 1387,224.5 1388,219.1 1389,216.2 1390,215.0 1391,210.6 1392,213.2 1393,214.3 1394,216.8 1395,218.4 1396,213.9 1397,212.7 1398,214.2 1399,212.1 1400,209.6 1401,215.9 1402,215.9 1403,214.9 1404,207.9 1405,211.1 1406,212.3 1407,210.5 1408,218.4 1409,214.7 1410,213.2 1411,206.8 1412,213.6 1413,222.5 1414,212.8 1415,217.9 1416,215.3 1417,215.5 1418,219.5 1419,225.0 1420,225.2 1421,217.4 1422,210.9 1423,208.1 1424,216.4 1425,211.4 1426,215.3 1427,215.1 1428,216.6 1429,212.9 1430,215.0 1431,227.6 1432,210.8 1433,211.9 1434,212.4 1435,214.6 1436,216.5 1437,224.7 1438,213.7 1439,214.6 1440,211.7 1441,214.2 1442,218.9 1443,211.2 1444,214.5 1445,212.0 1446,214.6 1447,213.0 1448,223.9 1449,216.8 1450,213.4 1451,211.8 1452,219.1 1453,218.1 1454,209.7 1455,210.5 1456,214.6 1457,213.6 1458,215.7 1459,218.9 1460,213.2 1461,203.7 1462,215.6 1463,216.4 1464,210.8 1465,211.2 1466,212.9 1467,220.6 1468,214.7 1469,209.9 1470,217.3 1471,218.4 1472,210.1 1473,213.9 1474,217.8 1475,215.5 1476,212.3 1477,213.1 1478,213.5 1479,217.8 1480,217.3 1481,213.5 1482,216.7 1483,213.9 1484,216.7 1485,221.2 1486,223.9 1487,212.8 1488,213.7 1489,215.9 1490,213.8 1491,213.4 1492,218.5 1493,226.0 1494,210.9 1495,217.0 1496,208.3 1497,213.6 1498,210.1 1499,208.3 1500,212.5 1501,211.6 1502,215.3 1503,208.2 1504,210.8 1505,211.0 1506,218.2 1507,215.2 1508,212.1 1509,211.0 1510,215.6 1511,215.7 1512,216.6 1513,220.1 1514,218.4 1515,215.3 1516,215.0 1517,216.6 1518,209.7 1519,208.2 1520,213.1 1521,217.0 1522,223.0 1523,210.7 1524,214.7 1525,216.4 1526,223.0 1527,218.8 1528,211.2 1529,209.4 1530,212.6 1531,218.4 1532,215.8 1533,218.4 1534,212.9 1535,214.3 1536,222.2 1537,222.0 1538,214.5 1539,215.9 1540,216.1 1541,212.1 1542,217.2 1543,218.1 1544,211.0 1545,214.1 1546,218.1 1547,218.4 1548,213.3 1549,220.7 1550,219.3 1551,214.4 1552,209.5 1553,210.9 1554,209.8 1555,212.9 1556,211.0 1557,209.3 1558,219.1 1559,212.2 1560,212.9 1561,212.3 1562,216.0 1563,212.5 1564,212.0 1565,213.1 1566,216.8 1567,211.7 1568,210.9 1569,206.9 1570,209.5 1571,209.3 1572,213.4 1573,219.4 1574,209.5 1575,215.1 1576,212.4 1577,213.8 1578,211.4 1579,205.1 1580,207.8 1581,210.8 1582,210.9 1583,210.0 1584,208.9 1585,216.7 1586,217.2 1587,219.0 1588,207.7 1589,209.0 1590,220.0 1591,214.5 1592,210.2 1593,209.4 1594,206.0 1595,216.3 1596,212.7 1597,207.8 1598,215.1 1599,216.9 1600,218.2 1601,215.4 1602,211.9 1603,211.8 1604,213.9 1605,218.7 1606,214.9 1607,218.6 1608,209.2 1609,208.4 1610,218.0 1611,215.5 1612,214.0 1613,219.5 1614,220.4 1615,218.1 1616,213.7 1617,212.9 1618,210.3 1619,213.9 1620,212.3 1621,213.9 1622,213.3 1623,214.4 1624,219.7 1625,212.9 1626,209.9 1627,215.9 1628,217.0 1629,208.8 1630,208.4 1631,213.4 1632,214.1 1633,214.4 1634,224.1 1635,211.6 1636,212.8 1637,212.8 1638,209.3 1639,217.0 1640,219.9 1641,213.4 1642,216.1 1643,212.2 1644,208.0 1645,208.0 1646,216.1 1647,210.2 1648,209.5 1649,215.7 1650,213.9 1651,217.5 1652,210.8 1653,207.4 1654,215.1 1655,210.4 1656,213.6 1657,209.7 1658,219.6 1659,224.7 1660,210.8 1661,212.0 1662,217.9 1663,216.9 1664,211.7 1665,212.1 1666,210.4 1667,208.8 1668,216.2 1669,216.3 1670,214.0 1671,212.7 1672,214.0 1673,208.8 1674,214.5 1675,209.1 1676,211.5 1677,210.0 1678,223.7 1679,214.5 1680,213.1 1681,217.4 1682,215.4 1683,213.2 1684,216.6 1685,207.8 1686,211.2 1687,215.5 1688,208.6 1689,210.9 1690,210.3 1691,204.6 1692,203.7 1693,211.3 1694,212.3 1695,211.5 1696,215.0 1697,234.9 1698,236.0 1699,231.9 1700,232.5 1701,246.2 1702,245.5 1703,243.2 1704,246.0 1705,243.7 1706,240.3 1707,247.8 1708,241.5 1709,236.3 1710,240.5 1711,247.5 1712,239.6 1713,234.6 1714,237.7 1715,246.0 1716,240.6 1717,241.1 1718,240.4 1719,240.3 1720,240.3 1721,240.9 1722,240.0 1723,244.6 1724,243.4 1725,245.1 1726,246.8 1727,240.4 1728,249.2 1729,249.3 1730,246.0 1731,243.1 1732,248.9 1733,249.2 1734,245.8 1735,246.4 1736,244.2 1737,244.4 1738,249.3 1739,242.0 1740,247.2 1741,246.0 1742,244.1 1743,246.6 1744,255.6 1745,243.3 1746,241.9 1747,245.2 1748,243.9 1749,239.4 1750,243.7 1751,244.5 1752,248.1 1753,246.3 1754,246.6 1755,249.1 1756,251.2 1757,247.9 1758,240.7 1759,244.0 1760,243.6 1761,249.5 1762,246.8 1763,246.5 1764,243.1 1765,249.7 1766,243.5 1767,255.7 1768,246.1 1769,247.4 1770,247.7 1771,251.1 1772,257.5 1773,249.6 1774,247.9 1775,248.6 1776,248.5 1777,247.6 1778,249.6 1779,248.5 1780,239.4 1781,248.2 1782,248.5 1783,254.3 1784,255.0 1785,262.7 1786,254.8 1787,252.1 1788,248.3 1789,256.9 1790,251.2 1791,250.6 1792,252.9 1793,252.3 1794,253.6 1795,253.1 1796,257.7 1797,247.8 1798,256.1 1799,250.3 1800,259.4 1801,255.2 1802,251.9 1803,251.4 1804,265.0 1805,254.3 1806,249.0 1807,248.3 1808,257.6 1809,260.1 1810,253.8 1811,255.1 1812,256.0 1813,259.3 1814,260.1 1815,263.0 1816,259.5 1817,253.1 1818,256.7 1819,261.6 1819,356" fill="url(#fg)"/>
<path d="M826 137.5 H1819 M826 192.5 H1819 M826 247.5 H1819 M826 302.5 H1819 M900.5 83 V356 M997.5 83 V356 M1094.5 83 V356 M1191.5 83 V356 M1288.5 83 V356 M1385.5 83 V356 M1482.5 83 V356 M1579.5 83 V356 M1676.5 83 V356 M1774.5 83 V356" stroke="#8c8c96" stroke-width="1" fill="none" shape-rendering="crispEdges"/>
<path d="M825 81 H1821 V357 H825 Z M826 83 V356 H1819 V83 Z" fill="#a2a2a4" fill-rule="evenodd"/>
<polyline points="826,257.0 827,247.8 828,257.3 829,254.9 830,251.8 831,247.5 832,251.7 833,255.3 834,250.5 835,247.8 836,251.3 837,254.8 838,251.0 839,255.0 840,255.0 841,252.4 842,250.9 843,251.0 844,247.7 845,248.3 846,250.9 847,249.1 848,254.3 849,246.7 850,252.4 851,250.0 852,249.5 853,252.6 854,258.3 855,251.3 856,252.5 857,255.6 858,258.2 859,249.9 860,251.9 861,258.8 862,253.3 863,254.6 864,254.4 865,249.7 866,254.8 867,257.2 868,259.1 869,255.9 870,252.5 871,254.1 872,251.6 873,256.0 874,251.5 875,250.7 876,254.7 877,247.2 878,255.8 879,263.5 880,259.4 881,249.6 882,248.1 883,258.0 884,254.7 885,256.1 886,261.0 887,256.7 888,258.0 889,255.1 890,261.9 891,255.6 892,251.6 893,258.8 894,255.8 895,256.4 896,259.5 897,262.4 898,258.3 899,258.9 900,256.6 901,251.3 902,264.4 903,255.4 904,258.5 905,254.5 906,247.9 907,257.7 908,255.6 909,249.8 910,257.9 911,261.2 912,250.0 913,246.4 914,248.2 915,257.6 916,253.4 917,255.8 918,256.0 919,251.4 920,256.5 921,256.5 922,260.3 923,258.4 924,256.2 925,250.1 926,251.7 927,251.8 928,252.6 929,250.3 930,246.5 931,244.7 932,251.0 933,256.4 934,248.1 935,248.7 936,249.5 937,250.2 938,251.3 939,249.5 940,252.7 941,249.7 942,255.8 943,250.5 944,252.8 945,257.0 946,252.5 947,250.5 948,249.0 949,246.1 950,238.1 951,222.8 952,213.9 953,216.5 954,219.0 955,219.0 956,223.3 957,220.5 958,215.0 959,218.3 960,218.7 961,212.4 962,212.4 963,219.7 964,216.0 965,223.0 966,212.4 967,217.4 968,225.0 969,213.2 970,213.5 971,217.2 972,222.7 973,221.2 974,216.7 975,214.8 976,217.7 977,216.3 978,221.4 979,220.3 980,217.1 981,217.7 982,219.2 983,215.8 984,216.4 985,213.8 986,223.6 987,223.9 988,224.9 989,219.9 990,217.6 991,218.1 992,214.7 993,215.2 994,216.1 995,216.2 996,216.7 997,219.3 998,215.6 999,212.4 1000,215.5 1001,217.1 1002,219.5 1003,223.4 1004,220.0 1005,218.0 1006,215.4 1007,219.1 1008,213.4 1009,215.9 1010,221.5 1011,225.0 1012,225.8 1013,216.2 1014,217.4 1015,219.7 1016,218.0 1017,219.3 1018,214.8 1019,221.0 1020,223.4 1021,220.1 1022,216.4 1023,219.6 1024,223.4 1025,218.9 1026,218.8 1027,217.9 1028,213.8 1029,223.8 1030,224.4 1031,222.6 1032,218.8 1033,219.0 1034,223.4 1035,218.2 1036,222.2 1037,217.6 1038,215.8 1039,215.6 1040,220.0 1041,223.4 1042,217.6 1043,218.9 1044,221.9 1045,215.6 1046,216.6 1047,221.5 1048,219.6 1049,220.2 1050,217.0 1051,212.4 1052,223.8 1053,216.6 1054,221.5 1055,216.2 1056,221.9 1057,214.0 1058,213.8 1059,217.1 1060,213.7 1061,211.2 1062,219.2 1063,215.7 1064,224.2 1065,221.9 1066,215.5 1067,221.6 1068,219.6 1069,212.6 1070,212.2 1071,218.4 1072,216.1 1073,215.7 1074,218.4 1075,219.4 1076,221.3 1077,217.2 1078,215.7 1079,219.0 1080,217.9 1081,212.7 1082,212.7 1083,218.6 1084,212.9 1085,221.3 1086,217.5 1087,218.7 1088,216.5 1089,217.3 1090,225.0 1091,223.9 1092,215.2 1093,212.5 1094,218.1 1095,217.8 1096,221.8 1097,218.8 1098,217.4 1099,212.5 1100,211.3 1101,215.6 1102,216.0 1103,214.4 1104,211.3 1105,216.8 1106,216.8 1107,223.2 1108,217.5 1109,211.7 1110,215.2 1111,214.1 1112,217.3 1113,216.6 1114,216.4 1115,225.9 1116,216.9 1117,214.4 1118,214.0 1119,212.6 1120,220.4 1121,218.6 1122,222.9 1123,213.0 1124,216.3 1125,215.9 1126,209.4 1127,217.1 1128,217.3 1129,218.3 1130,218.8 1131,219.4 1132,219.0 1133,214.8 1134,210.0 1135,212.9 1136,214.1 1137,215.8 1138,216.6 1139,219.0 1140,221.4 1141,222.0 1142,222.9 1143,222.5 1144,213.4 1145,214.6 1146,213.9 1147,217.7 1148,214.7 1149,208.8 1150,212.3 1151,219.4 1152,218.4 1153,213.2 1154,212.8 1155,222.1 1156,213.1 1157,212.9 1158,219.0 1159,216.7 1160,220.0 1161,214.7 1162,213.9 1163,219.2 1164,213.4 1165,216.2 1166,218.0 1167,217.2 1168,217.5 1169,210.3 1170,217.2 1171,216.5 1172,214.1 1173,219.9 1174,217.2 1175,220.3 1176,216.9 1177,215.7 1178,213.7 1179,220.3 1180,220.6 1181,214.4 1182,214.3 1183,216.5 1184,220.5 1185,213.7 1186,218.8 1187,222.2 1188,219.8 1189,216.0 1190,216.0 1191,210.4 1192,222.1 1193,219.0 1194,218.8 1195,226.8 1196,219.9 1197,213.6 1198,220.2 1199,217.7 1200,215.6 1201,224.0 1202,218.1 1203,212.9 1204,211.3 1205,212.7 1206,218.5 1207,214.2 1208,219.1 1209,222.5 1210,216.8 1211,215.3 1212,217.5 1213,216.7 1214,216.8 1215,216.4 1216,213.9 1217,214.5 1218,220.2 1219,220.0 1220,210.6 1221,211.7 1222,214.0 1223,211.3 1224,212.8 1225,216.6 1226,210.7 1227,213.4 1228,209.2 1229,208.8 1230,213.4 1231,212.6 1232,215.1 1233,215.1 1234,213.7 1235,215.9 1236,221.6 1237,218.1 1238,222.1 1239,211.7 1240,215.7 1241,211.1 1242,216.1 1243,215.7 1244,214.4 1245,214.9 1246,218.9 1247,212.8 1248,213.2 1249,218.5 1250,217.1 1251,216.9 1252,208.0 1253,217.1 1254,210.3 1255,217.2 1256,214.4 1257,213.0 1258,215.5 1259,217.5 1260,216.5 1261,221.1 1262,214.0 1263,218.2 1264,223.8 1265,218.1 1266,219.1 1267,220.3 1268,224.9 1269,226.5 1270,217.3 1271,223.7 1272,216.5 1273,215.8 1274,217.2 1275,225.6 1276,217.5 1277,215.4 1278,213.5 1279,217.3 1280,214.2 1281,215.2 1282,221.3 1283,217.4 1284,216.7 1285,219.9 1286,223.4 1287,210.9 1288,213.9 1289,216.9 1290,216.5 1291,217.1 1292,217.6 1293,217.3 1294,217.6 1295,217.3 1296,218.5 1297,217.6 1298,212.8 1299,217.9 1300,218.1 1301,226.0 1302,222.1 1303,220.3 1304,215.5 1305,219.6 1306,215.0 1307,217.7 1308,214.2 1309,213.0 1310,220.9 1311,217.1 1312,218.9 1313,227.8 1314,215.5 1315,211.0 1316,220.0 1317,216.2 1318,217.1 1319,215.9 1320,222.7 1321,222.1 1322,229.1 1323,233.7 1324,232.5 1325,227.0 1326,224.8 1327,219.0 1328,215.8 1329,212.3 1330,215.9 1331,208.9 1332,220.7 1333,216.1 1334,216.0 1335,217.4 1336,224.6 1337,223.0 1338,214.3 1339,211.4 1340,217.5 1341,223.6 1342,223.5 1343,215.2 1344,215.4 1345,212.9 1346,216.6 1347,214.8 1348,211.4 1349,211.3 1350,221.4 1351,217.7 1352,212.2 1353,214.5 1354,218.0 1355,221.4 1356,223.0 1357,213.4 1358,214.8 1359,221.3 1360,215.0 1361,215.6 1362,216.6 1363,217.9 1364,213.4 1365,215.2 1366,215.3 1367,215.1 1368,215.0 1369,213.9 1370,216.4 1371,217.4 1372,215.3 1373,216.3 1374,210.6 1375,220.7 1376,216.2 1377,224.3 1378,212.4 1379,213.3 1380,217.9 1381,212.0 1382,210.5 1383,211.9 1384,206.3 1385,213.7 1386,215.0 1387,224.5 1388,219.1 1389,216.2 1390,215.0 1391,210.6 1392,213.2 1393,214.3 1394,216.8 1395,218.4 1396,213.9 1397,212.7 1398,214.2 1399,212.1 1400,209.6 1401,215.9 1402,215.9 1403,214.9 1404,207.9 1405,211.1 1406,212.3 1407,210.5 1408,218.4 1409,214.7 1410,213.2 1411,206.8 1412,213.6 1413,222.5 1414,212.8 1415,217.9 1416,215.3 1417,215.5 1418,219.5 1419,225.0 1420,225.2 1421,217.4 1422,210.9 1423,208.1 1424,216.4 1425,211.4 1426,215.3 1427,215.1 1428,216.6 1429,212.9 1430,215.0 1431,227.6 1432,210.8 1433,211.9 1434,212.4 1435,214.6 1436,216.5 1437,224.7 1438,213.7 1439,214.6 1440,211.7 1441,214.2 1442,218.9 1443,211.2 1444,214.5 1445,212.0 1446,214.6 1447,213.0 1448,223.9 1449,216.8 1450,213.4 1451,211.8 1452,219.1 1453,218.1 1454,209.7 1455,210.5 1456,214.6 1457,213.6 1458,215.7 1459,218.9 1460,213.2 1461,203.7 1462,215.6 1463,216.4 1464,210.8 1465,211.2 1466,212.9 1467,220.6 1468,214.7 1469,209.9 1470,217.3 1471,218.4 1472,210.1 1473,213.9 1474,217.8 1475,215.5 1476,212.3 1477,213.1 1478,213.5 1479,217.8 1480,217.3 1481,213.5 1482,216.7 1483,213.9 1484,216.7 1485,221.2 1486,223.9 1487,212.8 1488,213.7 1489,215.9 1490,213.8 1491,213.4 1492,218.5 1493,226.0 1494,210.9 1495,217.0 1496,208.3 1497,213.6 1498,210.1 1499,208.3 1500,212.5 1501,211.6 1502,215.3 1503,208.2 1504,210.8 1505,211.0 1506,218.2 1507,215.2 1508,212.1 1509,211.0 1510,215.6 1511,215.7 1512,216.6 1513,220.1 1514,218.4 1515,215.3 1516,215.0 1517,216.6 1518,209.7 1519,208.2 1520,213.1 1521,217.0 1522,223.0 1523,210.7 1524,214.7 1525,216.4 1526,223.0 1527,218.8 1528,211.2 1529,209.4 1530,212.6 1531,218.4 1532,215.8 1533,218.4 1534,212.9 1535,214.3 1536,222.2 1537,222.0 1538,214.5 1539,215.9 1540,216.1 1541,212.1 1542,217.2 1543,218.1 1544,211.0 1545,214.1 1546,218.1 1547,218.4 1548,213.3 1549,220.7 1550,219.3 1551,214.4 1552,209.5 1553,210.9 1554,209.8 1555,212.9 1556,211.0 1557,209.3 1558,219.1 1559,212.2 1560,212.9 1561,212.3 1562,216.0 1563,212.5 1564,212.0 1565,213.1 1566,216.8 1567,211.7 1568,210.9 1569,206.9 1570,209.5 1571,209.3 1572,213.4 1573,219.4 1574,209.5 1575,215.1 1576,212.4 1577,213.8 1578,211.4 1579,205.1 1580,207.8 1581,210.8 1582,210.9 1583,210.0 1584,208.9 1585,216.7 1586,217.2 1587,219.0 1588,207.7 1589,209.0 1590,220.0 1591,214.5 1592,210.2 1593,209.4 1594,206.0 1595,216.3 1596,212.7 1597,207.8 1598,215.1 1599,216.9 1600,218.2 1601,215.4 1602,211.9 1603,211.8 1604,213.9 1605,218.7 1606,214.9 1607,218.6 1608,209.2 1609,208.4 1610,218.0 1611,215.5 1612,214.0 1613,219.5 1614,220.4 1615,218.1 1616,213.7 1617,212.9 1618,210.3 1619,213.9 1620,212.3 1621,213.9 1622,213.3 1623,214.4 1624,219.7 1625,212.9 1626,209.9 1627,215.9 1628,217.0 1629,208.8 1630,208.4 1631,213.4 1632,214.1 1633,214.4 1634,224.1 1635,211.6 1636,212.8 1637,212.8 1638,209.3 1639,217.0 1640,219.9 1641,213.4 1642,216.1 1643,212.2 1644,208.0 1645,208.0 1646,216.1 1647,210.2 1648,209.5 1649,215.7 1650,213.9 1651,217.5 1652,210.8 1653,207.4 1654,215.1 1655,210.4 1656,213.6 1657,209.7 1658,219.6 1659,224.7 1660,210.8 1661,212.0 1662,217.9 1663,216.9 1664,211.7 1665,212.1 1666,210.4 1667,208.8 1668,216.2 1669,216.3 1670,214.0 1671,212.7 1672,214.0 1673,208.8 1674,214.5 1675,209.1 1676,211.5 1677,210.0 1678,223.7 1679,214.5 1680,213.1 1681,217.4 1682,215.4 1683,213.2 1684,216.6 1685,207.8 1686,211.2 1687,215.5 1688,208.6 1689,210.9 1690,210.3 1691,204.6 1692,203.7 1693,211.3 1694,212.3 1695,211.5 1696,215.0 1697,234.9 1698,236.0 1699,231.9 1700,232.5 1701,246.2 1702,245.5 1703,243.2 1704,246.0 1705,243.7 1706,240.3 1707,247.8 1708,241.5 1709,236.3 1710,240.5 1711,247.5 1712,239.6 1713,234.6 1714,237.7 1715,246.0 1716,240.6 1717,241.1 1718,240.4 1719,240.3 1720,240.3 1721,240.9 1722,240.0 1723,244.6 1724,243.4 1725,245.1 1726,246.8 1727,240.4 1728,249.2 1729,249.3 1730,246.0 1731,243.1 1732,248.9 1733,249.2 1734,245.8 1735,246.4 1736,244.2 1737,244.4 1738,249.3 1739,242.0 1740,247.2 1741,246.0 1742,244.1 1743,246.6 1744,255.6 1745,243.3 1746,241.9 1747,245.2 1748,243.9 1749,239.4 1750,243.7 1751,244.5 1752,248.1 1753,246.3 1754,246.6 1755,249.1 1756,251.2 1757,247.9 1758,240.7 1759,244.0 1760,243.6 1761,249.5 1762,246.8 1763,246.5 1764,243.1 1765,249.7 1766,243.5 1767,255.7 1768,246.1 1769,247.4 1770,247.7 1771,251.1 1772,257.5 1773,249.6 1774,247.9 1775,248.6 1776,248.5 1777,247.6 1778,249.6 1779,248.5 1780,239.4 1781,248.2 1782,248.5 1783,254.3 1784,255.0 1785,262.7 1786,254.8 1787,252.1 1788,248.3 1789,256.9 1790,251.2 1791,250.6 1792,252.9 1793,252.3 1794,253.6 1795,253.1 1796,257.7 1797,247.8 1798,256.1 1799,250.3 1800,259.4 1801,255.2 1802,251.9 1803,251.4 1804,265.0 1805,254.3 1806,249.0 1807,248.3 1808,257.6 1809,260.1 1810,253.8 1811,255.1 1812,256.0 1813,259.3 1814,260.1 1815,263.0 1816,259.5 1817,253.1 1818,256.7 1819,261.6" fill="none" stroke="#f0f0f0" stroke-width="1.5" stroke-linejoin="round"/>
<path d="M1223.1 83 V357.5" stroke="#d62222" stroke-width="1.5"/>
<path d="M1323.4 83 V357.5" stroke="#ecec3c" stroke-width="1.4"/>
<text x="810" y="88.6" font-size="16.5" text-anchor="end">40.0</text>
<text x="810" y="143.5" font-size="16.5" text-anchor="end">20.0</text>
<text x="810" y="198.4" font-size="16.5" text-anchor="end">0.0</text>
<text x="810" y="253.3" font-size="16.5" text-anchor="end">-20.0</text>
<text x="810" y="308.2" font-size="16.5" text-anchor="end">-40.0</text>
<text x="810" y="363.1" font-size="16.5" text-anchor="end">-60.0</text>
<text x="900.0" y="377" font-size="16.5" text-anchor="middle">228.2</text>
<text x="997.0" y="377" font-size="16.5" text-anchor="middle">228.4</text>
<text x="1094.0" y="377" font-size="16.5" text-anchor="middle">228.6</text>
<text x="1191.0" y="377" font-size="16.5" text-anchor="middle">228.8</text>
<text x="1288.0" y="377" font-size="16.5" text-anchor="middle">229</text>
<text x="1385.0" y="377" font-size="16.5" text-anchor="middle">229.2</text>
<text x="1482.0" y="377" font-size="16.5" text-anchor="middle">229.4</text>
<text x="1579.0" y="377" font-size="16.5" text-anchor="middle">229.6</text>
<text x="1676.0" y="377" font-size="16.5" text-anchor="middle">229.8</text>
<text x="1774.0" y="377" font-size="16.5" text-anchor="middle">230</text>
<text x="1323" y="406.9" font-size="20" text-anchor="middle">Frequency (MHz)</text>
<text transform="translate(742.8 220) rotate(-90)" font-size="20" text-anchor="middle">Magnitude (dB)</text>
<rect x="1241" y="526" width="73" height="143" fill="#3e3e3e"/>
<path d="M1241 554.5 H1841 M1241 583.5 H1841 M1241 612.5 H1841 M1241 641.5 H1841 M1268.5 526 V669 M1309.5 526 V669 M1349.5 526 V669 M1389.5 526 V669 M1429.5 526 V669 M1469.5 526 V669 M1510.5 526 V669 M1550.5 526 V669 M1590.5 526 V669 M1630.5 526 V669 M1671.5 526 V669 M1711.5 526 V669 M1751.5 526 V669 M1791.5 526 V669 M1831.5 526 V669" stroke="#8a8a8a" stroke-width="1" fill="none" shape-rendering="crispEdges"/>
<path d="M1240 524 H1843 V670 H1240 Z M1241 526 V669 H1841 V526 Z" fill="#a2a2a2" fill-rule="evenodd"/>
<path d="M1240 524 H1241 V670.5 H1240 Z" fill="#d4605a"/><path d="M1241 526 H1241.8 V670.5 H1241 Z" fill="#8e2e28"/>
<path d="M1314.5 526 V669" stroke="#e6e63c" stroke-width="1.2" stroke-dasharray="1.3 1.3"/>
<polyline points="1241,618.7 1242,615.5 1243,614.3 1244,614.9 1245,616.9 1246,616.8 1247,621.8 1248,621.5 1249,616.9 1250,615.2 1251,615.0 1252,610.2 1253,611.4 1254,613.6 1255,612.7 1256,610.1 1257,615.7 1258,618.3 1259,620.7 1260,616.2 1261,617.6 1262,621.7 1263,621.8 1264,616.0 1265,611.8 1266,609.2 1267,615.5 1268,613.0 1269,612.0 1270,613.1 1271,613.2 1272,611.8 1273,615.4 1274,616.0 1275,612.6 1276,607.4 1277,609.2 1278,609.7 1279,609.7 1280,616.4 1281,620.1 1282,619.4 1283,618.1 1284,614.1 1285,615.2 1286,620.3 1287,616.3 1288,611.0 1289,613.4 1290,624.6 1291,616.3 1292,607.7 1293,605.2 1294,611.2 1295,607.5 1296,604.9 1297,607.2 1298,610.0 1299,611.4 1300,618.0 1301,624.5 1302,619.6 1303,608.6 1304,608.8 1305,613.0 1306,614.5 1307,617.7 1308,620.6 1309,614.6 1310,609.1 1311,605.9 1312,601.4 1313,592.5 1314,579.2 1315,576.7 1316,591.7 1317,600.0 1318,604.8 1319,608.6 1320,612.3 1321,613.6 1322,614.2 1323,610.4 1324,606.7 1325,606.5 1326,610.1 1327,617.4 1328,620.8 1329,614.6 1330,612.2 1331,612.3 1332,613.3 1333,616.4 1334,616.1 1335,612.5 1336,610.3 1337,611.9 1338,613.9 1339,612.4 1340,616.2 1341,621.7 1342,618.2 1343,613.5 1344,612.1 1345,612.9 1346,618.5 1347,619.4 1348,615.6 1349,612.1 1350,613.7 1351,613.4 1352,614.9 1353,615.0 1354,614.7 1355,617.8 1356,624.2 1357,617.6 1358,612.7 1359,616.1 1360,616.6 1361,614.5 1362,616.4 1363,616.8 1364,612.7 1365,610.2 1366,605.7 1367,603.9 1368,604.9 1369,609.0 1370,609.2 1371,606.8 1372,608.2 1373,611.3 1374,609.6 1375,608.4 1376,608.6 1377,609.3 1378,607.0 1379,605.4 1380,604.3 1381,601.8 1382,597.6 1383,594.3 1384,591.1 1385,588.1 1386,583.3 1387,576.5 1388,566.8 1389,551.9 1390,551.9 1391,566.9 1392,576.5 1393,583.2 1394,587.6 1395,591.0 1396,595.4 1397,599.3 1398,601.3 1399,601.3 1400,601.7 1401,602.6 1402,603.3 1403,606.6 1404,611.0 1405,610.0 1406,607.0 1407,604.8 1408,603.1 1409,604.6 1410,608.8 1411,608.5 1412,610.4 1413,613.8 1414,612.0 1415,612.8 1416,610.5 1417,610.2 1418,615.4 1419,618.2 1420,617.5 1421,617.1 1422,616.8 1423,620.4 1424,627.8 1425,624.9 1426,619.0 1427,616.5 1428,615.7 1429,618.8 1430,621.9 1431,621.6 1432,618.5 1433,615.0 1434,613.1 1435,611.0 1436,608.5 1437,613.6 1438,615.9 1439,614.2 1440,614.7 1441,615.4 1442,612.4 1443,614.0 1444,614.2 1445,611.4 1446,608.5 1447,609.6 1448,614.1 1449,613.8 1450,616.4 1451,620.7 1452,621.6 1453,622.7 1454,618.0 1455,614.6 1456,613.1 1457,612.4 1458,614.4 1459,611.1 1460,610.1 1461,611.7 1462,612.5 1463,612.3 1464,606.8 1465,604.1 1466,608.4 1467,614.7 1468,613.6 1469,614.3 1470,611.7 1471,607.6 1472,608.5 1473,615.1 1474,622.3 1475,619.2 1476,617.2 1477,618.8 1478,615.2 1479,611.1 1480,611.2 1481,612.4 1482,618.1 1483,615.7 1484,612.1 1485,612.6 1486,611.4 1487,604.8 1488,602.8 1489,605.4 1490,614.1 1491,615.6 1492,612.0 1493,612.2 1494,612.5 1495,612.3 1496,610.8 1497,609.9 1498,611.0 1499,610.3 1500,609.6 1501,605.1 1502,607.4 1503,614.4 1504,614.6 1505,612.4 1506,614.3 1507,614.9 1508,615.0 1509,613.7 1510,612.6 1511,613.9 1512,617.9 1513,618.3 1514,613.1 1515,613.4 1516,615.8 1517,613.5 1518,612.4 1519,618.4 1520,621.0 1521,622.5 1522,620.2 1523,614.7 1524,608.3 1525,609.6 1526,612.9 1527,615.6 1528,614.2 1529,614.8 1530,616.7 1531,615.0 1532,613.2 1533,613.6 1534,615.4 1535,616.1 1536,616.6 1537,619.4 1538,618.5 1539,619.6 1540,619.5 1541,619.9 1542,625.3 1543,624.9 1544,624.2 1545,627.7 1546,619.6 1547,613.5 1548,614.8 1549,617.7 1550,619.8 1551,621.5 1552,616.8 1553,618.5 1554,615.3 1555,609.8 1556,612.5 1557,617.4 1558,625.0 1559,619.8 1560,610.4 1561,611.9 1562,616.3 1563,617.6 1564,616.7 1565,617.0 1566,618.4 1567,618.6 1568,619.3 1569,619.5 1570,621.8 1571,622.2 1572,616.7 1573,609.4 1574,609.2 1575,608.1 1576,608.7 1577,619.1 1578,633.1 1579,619.7 1580,612.4 1581,611.1 1582,614.7 1583,612.6 1584,613.8 1585,619.7 1586,618.7 1587,612.0 1588,610.8 1589,607.8 1590,604.5 1591,603.5 1592,610.8 1593,612.8 1594,607.4 1595,605.2 1596,609.9 1597,612.6 1598,611.5 1599,609.5 1600,612.1 1601,615.4 1602,615.8 1603,616.9 1604,627.7 1605,633.8 1606,623.4 1607,617.3 1608,619.0 1609,618.9 1610,618.4 1611,616.6 1612,617.2 1613,621.7 1614,625.2 1615,620.4 1616,620.0 1617,621.4 1618,621.2 1619,621.2 1620,619.5 1621,613.5 1622,614.3 1623,616.2 1624,612.9 1625,612.9 1626,612.9 1627,610.2 1628,608.7 1629,611.3 1630,615.1 1631,613.6 1632,612.2 1633,614.4 1634,609.3 1635,607.0 1636,612.9 1637,619.4 1638,614.2 1639,611.4 1640,614.9 1641,617.5 1642,614.2 1643,615.8 1644,618.7 1645,618.4 1646,618.1 1647,614.9 1648,609.7 1649,607.8 1650,608.4 1651,615.1 1652,620.2 1653,622.6 1654,617.3 1655,610.9 1656,612.1 1657,616.0 1658,614.5 1659,613.6 1660,611.8 1661,613.8 1662,618.8 1663,624.8 1664,620.8 1665,619.1 1666,620.8 1667,624.6 1668,617.7 1669,604.2 1670,597.1 1671,602.8 1672,611.9 1673,613.9 1674,606.1 1675,600.9 1676,600.6 1677,603.1 1678,609.2 1679,609.7 1680,606.8 1681,611.8 1682,620.2 1683,621.7 1684,619.0 1685,614.0 1686,619.1 1687,619.5 1688,617.7 1689,622.8 1690,625.0 1691,615.0 1692,610.1 1693,608.0 1694,609.9 1695,610.9 1696,608.5 1697,608.2 1698,611.5 1699,613.7 1700,619.5 1701,622.8 1702,618.3 1703,619.2 1704,616.6 1705,617.7 1706,620.2 1707,614.6 1708,608.0 1709,609.3 1710,609.7 1711,612.7 1712,611.6 1713,610.9 1714,606.8 1715,608.2 1716,608.4 1717,607.4 1718,608.2 1719,614.9 1720,614.1 1721,611.9 1722,612.3 1723,612.1 1724,610.7 1725,614.0 1726,617.6 1727,614.4 1728,614.1 1729,609.2 1730,603.7 1731,608.4 1732,616.0 1733,612.8 1734,610.7 1735,611.2 1736,615.6 1737,621.4 1738,612.1 1739,606.4 1740,608.6 1741,614.5 1742,614.6 1743,611.0 1744,610.9 1745,614.1 1746,617.6 1747,619.8 1748,624.4 1749,616.7 1750,607.7 1751,608.7 1752,615.8 1753,618.1 1754,617.2 1755,616.8 1756,609.3 1757,604.6 1758,608.6 1759,611.2 1760,609.8 1761,612.6 1762,613.3 1763,615.4 1764,617.6 1765,615.6 1766,614.5 1767,617.0 1768,619.0 1769,615.5 1770,612.5 1771,608.5 1772,602.1 1773,605.7 1774,611.8 1775,611.0 1776,606.1 1777,608.0 1778,613.7 1779,617.3 1780,612.6 1781,607.3 1782,605.1 1783,610.7 1784,613.0 1785,605.3 1786,601.8 1787,609.3 1788,613.8 1789,611.3 1790,611.4 1791,609.6 1792,608.0 1793,607.5 1794,606.7 1795,606.8 1796,607.1 1797,608.6 1798,607.4 1799,605.4 1800,603.7 1801,600.8 1802,598.5 1803,595.2 1804,590.0 1805,585.3 1806,578.1 1807,566.5 1808,554.8 1809,566.4 1810,577.6 1811,585.0 1812,589.5 1813,593.0 1814,596.9 1815,600.5 1816,603.3 1817,604.6 1818,605.2 1819,607.3 1820,607.9 1821,607.2 1822,606.5 1823,604.1 1824,606.9 1825,611.2 1826,613.6 1827,607.7 1828,606.1 1829,608.2 1830,605.8 1831,604.2 1832,606.5 1833,608.5 1834,609.3 1835,608.1 1836,610.3 1837,615.8 1838,615.1 1839,610.9 1840,615.7 1841,616.6 1842,610.5" fill="none" stroke="#f2f2f2" stroke-width="1.45" stroke-linejoin="round"/>
<circle cx="1315" cy="573" r="4.9" fill="#e01010"/>
<circle cx="1389.5" cy="547" r="5" fill="#ffee10"/>
<text x="1230" y="531.4" font-size="16.5" text-anchor="end">0.0</text>
<text x="1230" y="560.4" font-size="16.5" text-anchor="end">-10.0</text>
<text x="1230" y="589.4" font-size="16.5" text-anchor="end">-20.0</text>
<text x="1230" y="618.4" font-size="16.5" text-anchor="end">-30.0</text>
<text x="1230" y="647.4" font-size="16.5" text-anchor="end">-40.0</text>
<text x="1230" y="676.4" font-size="16.5" text-anchor="end">-50.0</text>
<text x="1268.0" y="686.3" font-size="12.5" text-anchor="middle">-60</text>
<text x="1308.3" y="686.3" font-size="12.5" text-anchor="middle">-40</text>
<text x="1348.5" y="686.3" font-size="12.5" text-anchor="middle">-20</text>
<text x="1388.7" y="686.3" font-size="12.5" text-anchor="middle">0</text>
<text x="1428.9" y="686.3" font-size="12.5" text-anchor="middle">20</text>
<text x="1469.1" y="686.3" font-size="12.5" text-anchor="middle">40</text>
<text x="1509.4" y="686.3" font-size="12.5" text-anchor="middle">60</text>
<text x="1549.6" y="686.3" font-size="12.5" text-anchor="middle">80</text>
<text x="1589.8" y="686.3" font-size="12.5" text-anchor="middle">100</text>
<text x="1630.0" y="686.3" font-size="12.5" text-anchor="middle">120</text>
<text x="1670.2" y="686.3" font-size="12.5" text-anchor="middle">140</text>
<text x="1710.5" y="686.3" font-size="12.5" text-anchor="middle">160</text>
<text x="1750.7" y="686.3" font-size="12.5" text-anchor="middle">180</text>
<text x="1790.9" y="686.3" font-size="12.5" text-anchor="middle">200</text>
<text x="1831.1" y="686.3" font-size="12.5" text-anchor="middle">220</text>
<text x="1540.8" y="708" font-size="17" text-anchor="middle">Distance Difference (km)</text>
<text transform="translate(1172.4 598) rotate(-90)" font-size="15.6" font-weight="bold" text-anchor="middle">Magnitude (dB)</text>
<path d="M1040 798.5 H1834.3 M1040 826.5 H1834.3 M1040 854.5 H1834.3 M1040 882.5 H1834.3 M1087.5 771 V909 M1164.5 771 V909 M1242.5 771 V909 M1320.5 771 V909 M1398.5 771 V909 M1475.5 771 V909 M1553.5 771 V909 M1631.5 771 V909 M1709.5 771 V909 M1786.5 771 V909" stroke="#8a8a8a" stroke-width="1" fill="none" shape-rendering="crispEdges"/>
<path d="M1038 769 H1836.3 V910 H1038 Z M1040 771 V909 H1834.3 V771 Z" fill="#a2a2a2" fill-rule="evenodd"/>
<path d="M1038 769 H1039 V911 H1038 Z" fill="#d4605a"/><path d="M1039 771 H1039.9 V911 H1039 Z" fill="#8e2e28"/>
<path d="M1040 907.5 H1834" stroke="#a6a6a6" stroke-width="1.1"/>
<path d="M1138.4 773 V908" stroke="#dede2a" stroke-width="2" stroke-dasharray="2 2.1"/>
<path d="M1288.0 773 V908" stroke="#dede2a" stroke-width="2" stroke-dasharray="2 2.1"/>
<path d="M1437.5 773 V908" stroke="#dede2a" stroke-width="2" stroke-dasharray="2 2.1"/>
<path d="M1587.1 773 V908" stroke="#dede2a" stroke-width="2" stroke-dasharray="2 2.1"/>
<path d="M1736.7 773 V908" stroke="#dede2a" stroke-width="2" stroke-dasharray="2 2.1"/>
<path d="M1157.4 908.0 L1157.85 850.2 L1158.95 850.2 L1159.4 908.0 Z" fill="#bfe3bf"/>
<path d="M1158.9 908.0 L1159.35 848.8 L1160.45 848.8 L1160.9 908.0 Z" fill="#e8ece8"/>
<path d="M1158.0 908.0 L1158.45 894.2 L1159.55 894.2 L1160.0 908.0 Z" fill="#e8ece8"/>
<path d="M1176.3 908.0 L1176.75 818.6 L1177.85 818.6 L1178.3 908.0 Z" fill="#8fd08f"/>
<path d="M1178.0 908.0 L1178.45 844.7 L1179.55 844.7 L1180.0 908.0 Z" fill="#e8ece8"/>
<path d="M1213.6 908.0 L1214.05 859.8 L1215.15 859.8 L1215.6 908.0 Z" fill="#bfe3bf"/>
<path d="M1215.0 908.0 L1215.45 850.2 L1216.55 850.2 L1217.0 908.0 Z" fill="#e8ece8"/>
<path d="M1250.9 908.0 L1251.35 862.6 L1252.45 862.6 L1252.9 908.0 Z" fill="#bfe3bf"/>
<path d="M1252.3 908.0 L1252.75 853.0 L1253.85 853.0 L1254.3 908.0 Z" fill="#e8ece8"/>
<path d="M1260.0 908.0 L1260.45 902.5 L1261.55 902.5 L1262.0 908.0 Z" fill="#e8ece8"/>
<path d="M1264.0 908.0 L1264.45 903.9 L1265.55 903.9 L1266.0 908.0 Z" fill="#e8ece8"/>
<path d="M1225.0 908.0 L1225.45 906.6 L1226.55 906.6 L1227.0 908.0 Z" fill="#e8ece8"/>
<path d="M1306.8 908.0 L1307.25 894.2 L1308.35 894.2 L1308.8 908.0 Z" fill="#bfe3bf"/>
<path d="M1308.2 908.0 L1308.65 826.8 L1309.75 826.8 L1310.2 908.0 Z" fill="#e8ece8"/>
<path d="M1316.1 908.0 L1316.55 901.1 L1317.65 901.1 L1318.1 908.0 Z" fill="#e8ece8"/>
<path d="M1325.5 908.0 L1325.95 876.4 L1327.05 876.4 L1327.5 908.0 Z" fill="#bfe3bf"/>
<path d="M1326.8 908.0 L1327.25 848.8 L1328.35 848.8 L1328.8 908.0 Z" fill="#e8ece8"/>
<path d="M1353.4 908.0 L1353.85 901.1 L1354.95 901.1 L1355.4 908.0 Z" fill="#e8ece8"/>
<path d="M1363.6 908.0 L1364.05 897.0 L1365.15 897.0 L1365.6 908.0 Z" fill="#e8ece8"/>
<path d="M1364.4 908.0 L1364.85 824.1 L1365.95 824.1 L1366.4 908.0 Z" fill="#e8ece8"/>
<path d="M1400.8 908.0 L1401.25 894.2 L1402.35 894.2 L1402.8 908.0 Z" fill="#e8ece8"/>
<path d="M1401.8 908.0 L1402.25 801.4 L1403.35 801.4 L1403.8 908.0 Z" fill="#e8ece8"/>
<path d="M1456.9 908.0 L1457.35 902.5 L1458.45 902.5 L1458.9 908.0 Z" fill="#bfe3bf"/>
<path d="M1458.0 908.0 L1458.45 820.8 L1459.55 820.8 L1460.0 908.0 Z" fill="#e8ece8"/>
<path d="M1475.6 908.0 L1476.05 897.0 L1477.15 897.0 L1477.6 908.0 Z" fill="#bfe3bf"/>
<path d="M1476.9 908.0 L1477.35 811.7 L1478.45 811.7 L1478.9 908.0 Z" fill="#e8ece8"/>
<path d="M1509.5 908.0 L1509.95 901.1 L1511.05 901.1 L1511.5 908.0 Z" fill="#e8ece8"/>
<path d="M1512.8 908.0 L1513.25 887.4 L1514.35 887.4 L1514.8 908.0 Z" fill="#bfe3bf"/>
<path d="M1513.9 908.0 L1514.35 779.3 L1515.45 779.3 L1515.9 908.0 Z" fill="#e8ece8"/>
<path d="M1523.2 908.0 L1523.65 899.7 L1524.75 899.7 L1525.2 908.0 Z" fill="#e8ece8"/>
<path d="M1551.2 908.0 L1551.65 804.0 L1552.75 804.0 L1553.2 908.0 Z" fill="#e8ece8"/>
<path d="M1606.0 908.0 L1606.45 902.5 L1607.55 902.5 L1608.0 908.0 Z" fill="#bfe3bf"/>
<path d="M1607.1 908.0 L1607.55 805.1 L1608.65 805.1 L1609.1 908.0 Z" fill="#e8ece8"/>
<path d="M1626.0 908.0 L1626.45 794.2 L1627.55 794.2 L1628.0 908.0 Z" fill="#e8ece8"/>
<path d="M1662.0 908.0 L1662.45 895.6 L1663.55 895.6 L1664.0 908.0 Z" fill="#bfe3bf"/>
<path d="M1663.6 908.0 L1664.05 770.4 L1665.15 770.4 L1665.6 908.0 Z" fill="#e8ece8"/>
<path d="M1685.8 908.0 L1686.25 899.7 L1687.35 899.7 L1687.8 908.0 Z" fill="#e8ece8"/>
<path d="M1699.2 908.0 L1699.65 905.2 L1700.75 905.2 L1701.2 908.0 Z" fill="#bfe3bf"/>
<path d="M1700.6 908.0 L1701.05 782.4 L1702.15 782.4 L1702.6 908.0 Z" fill="#e8ece8"/>
<text x="1026" y="776.2" font-size="16" text-anchor="end">1.0</text>
<text x="1026" y="804.0" font-size="16" text-anchor="end">0.8</text>
<text x="1026" y="831.9" font-size="16" text-anchor="end">0.6</text>
<text x="1026" y="859.7" font-size="16" text-anchor="end">0.4</text>
<text x="1026" y="887.6" font-size="16" text-anchor="end">0.2</text>
<text x="1026" y="915.4" font-size="16" text-anchor="end">0.0</text>
<text x="1087.2" y="928.4" font-size="16.3" text-anchor="middle">-900</text>
<text x="1164.9" y="928.4" font-size="16.3" text-anchor="middle">-700</text>
<text x="1242.7" y="928.4" font-size="16.3" text-anchor="middle">-500</text>
<text x="1320.5" y="928.4" font-size="16.3" text-anchor="middle">-300</text>
<text x="1398.2" y="928.4" font-size="16.3" text-anchor="middle">-100</text>
<text x="1476.0" y="928.4" font-size="16.3" text-anchor="middle">100</text>
<text x="1553.7" y="928.4" font-size="16.3" text-anchor="middle">300</text>
<text x="1631.5" y="928.4" font-size="16.3" text-anchor="middle">500</text>
<text x="1709.3" y="928.4" font-size="16.3" text-anchor="middle">700</text>
<text x="1787.0" y="928.4" font-size="16.3" text-anchor="middle">900</text>
<text x="1436" y="952.2" font-size="16.8" text-anchor="middle">TII Subcarrier</text>
<text transform="translate(971.3 840.6) rotate(-90)" font-size="15.5" font-weight="bold" text-anchor="middle">Magnitude</text>
</svg>
</body></html>
